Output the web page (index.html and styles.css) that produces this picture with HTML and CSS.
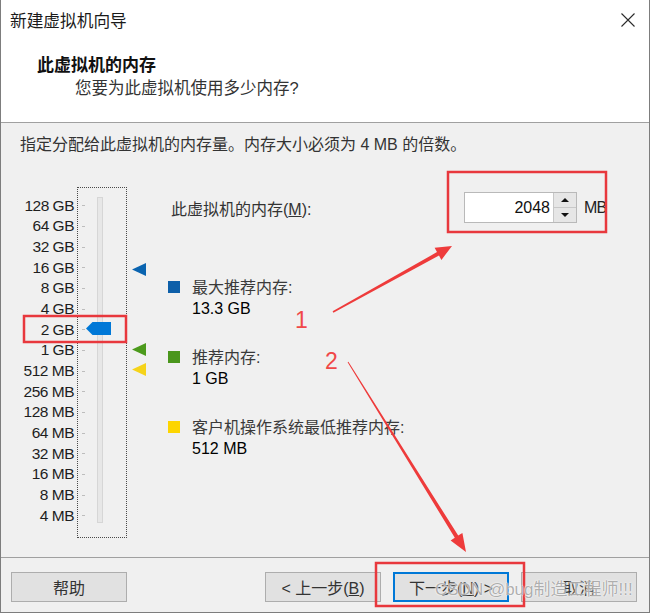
FILE: index.html
```html
<!DOCTYPE html>
<html lang="zh-CN">
<head>
<meta charset="utf-8">
<title>新建虚拟机向导</title>
<link rel="stylesheet" href="styles.css">
</head>
<body>
<div class="window">
  <div class="top">
    <div class="titlebar">
      <span class="title">新建虚拟机向导</span>
      <svg class="close" width="14" height="14" viewBox="0 0 14 14"><path d="M0.5 0.5L13.5 13.5M13.5 0.5L0.5 13.5" stroke="#2b2b2b" stroke-width="1.1" fill="none"/></svg>
    </div>
    <div class="header">
      <div class="h-title">此虚拟机的内存</div>
      <div class="h-sub">您要为此虚拟机使用多少内存?</div>
    </div>
  </div>

  <div class="content">
    <p class="instr">指定分配给此虚拟机的内存量。内存大小必须为 4 MB 的倍数。</p>
    <div class="main">
      <div class="scale">
        <div>128 GB</div><div>64 GB</div><div>32 GB</div><div>16 GB</div>
        <div>8 GB</div><div>4 GB</div><div>2 GB</div><div>1 GB</div>
        <div>512 MB</div><div>256 MB</div><div>128 MB</div><div>64 MB</div>
        <div>32 MB</div><div>16 MB</div><div>8 MB</div><div>4 MB</div>
      </div>
      <div class="slider">
        <div class="ticks">
          <i></i><i></i><i></i><i></i><i></i><i></i><i></i><i></i>
          <i></i><i></i><i></i><i></i><i></i><i></i><i></i><i></i>
        </div>
        <div class="track"></div>
        <div class="thumb" style="top:134px"></div>
      </div>
      <div class="markers">
        <div class="marker m-blue" style="top:76px"></div>
        <div class="marker m-green" style="top:156px"></div>
        <div class="marker m-yellow" style="top:176px"></div>
      </div>
      <div class="info">
        <div class="mem-row">
          <span class="mem-label">此虚拟机的内存(<u>M</u>):</span>
          <div class="spin">
            <div class="spin-input">2048</div>
            <div class="spin-btns">
              <div class="spin-btn"><span class="arr up"></span></div>
              <div class="spin-btn"><span class="arr down"></span></div>
            </div>
          </div>
          <span class="unit">MB</span>
        </div>
        <div class="legend">
          <div class="item">
            <span class="sq sq-blue"></span>
            <div class="item-text"><div class="item-name">最大推荐内存:</div><div class="item-val">13.3 GB</div></div>
          </div>
          <div class="item">
            <span class="sq sq-green"></span>
            <div class="item-text"><div class="item-name">推荐内存:</div><div class="item-val">1 GB</div></div>
          </div>
          <div class="item">
            <span class="sq sq-yellow"></span>
            <div class="item-text"><div class="item-name">客户机操作系统最低推荐内存:</div><div class="item-val">512 MB</div></div>
          </div>
        </div>
      </div>
    </div>
  </div>

  <div class="footer">
    <button class="btn">帮助</button>
    <button class="btn btn-prev">&lt; 上一步(<u>B</u>)</button>
    <button class="btn btn-next">下一步(<u>N</u>) &gt;</button>
    <button class="btn">取消</button>
  </div>

  <svg class="annot" width="650" height="614" viewBox="0 0 650 614">
    <rect x="24" y="316" width="102" height="26" fill="none" stroke="#e8383d" stroke-width="2.5"/>
    <rect x="448" y="172" width="158" height="60" fill="none" stroke="#e8383d" stroke-width="2.5"/>
    <rect x="376" y="563" width="148" height="43" fill="none" stroke="#e8383d" stroke-width="2.5"/>
    <polygon points="332.6,311.3 437,252.1 434.6,247.7 452,246 441.4,259.9 439,255.6 333.4,312.7" fill="#ee3b3b"/>
    <polygon points="347.6,362.3 454.8,537.8 450.6,540.4 466,552 462.4,533 458.2,535.6 348.4,361.7" fill="#ee3b3b"/>
  </svg>
  <span class="num n1">1</span>
  <span class="num n2">2</span>
  <span class="watermark">CSDN @bug制造工程师!!!</span>
</div>
</body>
</html>
```
FILE: styles.css
```css
* { box-sizing: border-box; }
html, body { margin: 0; padding: 0; background: #ffffff; }
body {
  font-family: "Liberation Sans", "Noto Sans CJK SC", sans-serif;
  color: #222;
}
.window {
  position: relative;
  width: 650px;
  height: 613px;
  border-left: 1px solid #7d7d7d;
  border-right: 1px solid #7d7d7d;
  border-bottom: 1px solid #7d7d7d;
  background: #f0f0f0;
  display: flex;
  flex-direction: column;
  overflow: hidden;
}
.top {
  height: 123px;
  background: #ffffff;
  border-bottom: 1px solid #a0a0a0;
  flex: none;
}
.titlebar {
  height: 40px;
  display: flex;
  align-items: center;
  justify-content: space-between;
  padding: 0 14px 0 9px;
}
.title {
  font-size: 16.7px;
  color: #1a1a1a;
  font-family: "Noto Sans CJK SC", sans-serif;
}
.close { display: block; }
.header { padding: 13px 0 0 36px; }
.h-title {
  font-size: 17px;
  line-height: 22px;
  font-weight: 700;
  color: #111;
  font-family: "Noto Sans CJK SC", sans-serif;
}
.h-sub {
  margin: 2px 0 0 38px;
  font-size: 16.5px;
  line-height: 22px;
  color: #333;
}
.content {
  height: 434px;
  flex: none;
  padding: 11px 0 0 19px;
}
.instr {
  margin: 0;
  font-size: 16px;
  line-height: 22px;
  color: #333;
}
.main {
  margin-top: 31px;
  display: flex;
  align-items: flex-start;
}
.scale {
  width: 54px;
  padding-top: 8.67px;
  text-align: right;
  font-size: 15.5px;
  letter-spacing: -0.5px;
  color: #1e1e1e;
}
.scale div { height: 20.67px; line-height: 20.67px; white-space: nowrap; }
.slider {
  position: relative;
  margin-left: 3px;
  width: 50px;
  height: 351px;
  border: 1px dotted #4a4a4a;
  display: flex;
  align-items: flex-start;
  padding-left: 4px;
}
.ticks {
  width: 3px;
  padding-top: 7.67px;
  display: flex;
  flex-direction: column;
}
.ticks i {
  display: flex;
  align-items: center;
  height: 20.67px;
}
.ticks i::before {
  content: "";
  display: block;
  width: 3px;
  height: 1px;
  background: #bdbdbd;
}
.track {
  margin: 9px 0 0 12px;
  width: 6px;
  height: 326px;
  background: #e7e7e7;
  border: 1px solid #d6d6d6;
}
.thumb {
  position: absolute;
  left: 8px;
  width: 25px;
  height: 13px;
  background: #0078d7;
  clip-path: polygon(0 50%, 26% 0, 100% 0, 100% 100%, 26% 100%);
}
.markers {
  position: relative;
  margin-left: 5px;
  width: 14px;
  height: 351px;
}
.marker {
  position: absolute;
  left: 0;
  width: 14px;
  height: 13px;
  clip-path: polygon(0 50%, 100% 0, 100% 100%);
}
.m-blue { background: #0a64b0; }
.m-green { background: #4c9a1c; }
.m-yellow { background: #f5d31a; }
.info {
  margin-left: 22px;
  display: flex;
  flex-direction: column;
}
.mem-row {
  margin-top: 5px;
  height: 31px;
  display: flex;
  align-items: center;
}
.mem-label {
  width: 296px;
  padding-left: 3px;
  font-size: 16px;
  color: #333;
}
.spin {
  display: flex;
  height: 31px;
  border: 1px solid #b9b9b9;
}
.spin-input {
  width: 88px;
  background: #fff;
  text-align: right;
  padding-right: 3px;
  font-size: 16px;
  line-height: 29px;
  color: #111;
}
.spin-btns {
  width: 23px;
  display: flex;
  flex-direction: column;
  border-left: 1px solid #c8c8c8;
}
.spin-btn {
  flex: 1;
  background: #e6e6e6;
  display: flex;
  align-items: center;
  justify-content: center;
}
.spin-btn + .spin-btn { border-top: 1px solid #c8c8c8; }
.arr {
  width: 0; height: 0;
  border-left: 4px solid transparent;
  border-right: 4px solid transparent;
}
.arr.up { border-bottom: 4px solid #111; }
.arr.down { border-top: 4px solid #111; }
.unit {
  margin-left: 7px;
  font-size: 16px;
  letter-spacing: -0.8px;
  color: #222;
}
.legend {
  margin-top: 53.5px;
  display: flex;
  flex-direction: column;
  gap: 28px;
}
.item { display: flex; align-items: flex-start; }
.sq {
  flex: none;
  width: 12px;
  height: 12px;
  margin: 4.5px 12px 0 0;
}
.sq-blue { background: #0d5fa9; }
.sq-green { background: #4a961c; }
.sq-yellow { background: #fdd500; }
.item-name {
  font-size: 16px;
  line-height: 21px;
  color: #3a3a3a;
}
.item-val {
  font-size: 16px;
  line-height: 21px;
  color: #000;
}
.footer {
  flex: 1;
  border-top: 1px solid #a0a0a0;
  display: flex;
  align-items: flex-start;
  padding: 14px 12px 0 10px;
  gap: 12px;
}
.btn {
  width: 116px;
  height: 30px;
  background: #e1e1e1;
  border: 1px solid #adadad;
  font-family: "Liberation Sans", "Noto Sans CJK SC", sans-serif;
  font-size: 16px;
  color: #333;
  padding: 0;
}
.btn-prev { margin-left: auto; }
.btn-next { border: 2px solid #0078d7; }
.annot {
  position: absolute;
  left: -1px;
  top: 0;
  pointer-events: none;
}
.num {
  position: absolute;
  font-size: 23px;
  line-height: 23px;
  color: #f04848;
}
.n1 { left: 294px; top: 309px; }
.n2 { left: 324px; top: 350px; }
.watermark {
  position: absolute;
  left: 434px;
  top: 579px;
  font-size: 17px;
  line-height: 22px;
  color: rgba(95, 95, 95, 0.5);
  text-shadow: 0 0 1px #fff, 0 0 2px #fff;
  white-space: nowrap;
}
```
